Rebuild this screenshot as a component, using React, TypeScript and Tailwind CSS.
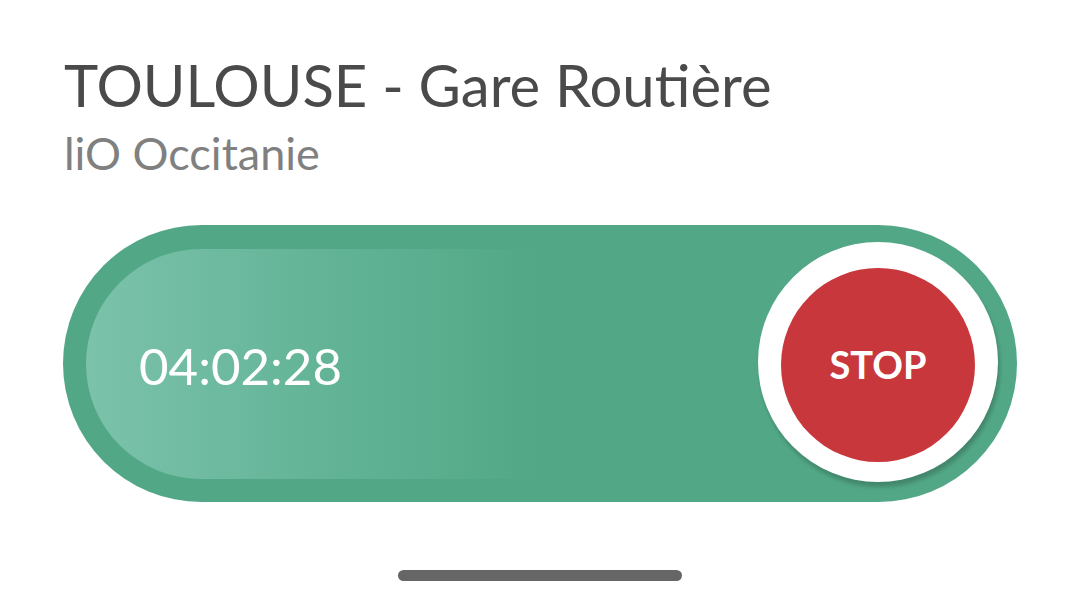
export default function App() {
  return (
    <div
      className="flex h-[607px] w-[1080px] flex-col bg-white"
      style={{ fontFamily: "Lato, 'Open Sans', sans-serif" }}
    >
      <div className="px-[64px] pt-[49px]">
        <h1 className="text-[58px] leading-[72px] font-normal text-[#4a4a4a]">
          TOULOUSE - Gare Routière
        </h1>
        <p className="mt-[6px] text-[45px] leading-[52px] text-[#808080]">liO Occitanie</p>
      </div>

      <div className="mt-[46px] px-[63px]">
        <div className="flex h-[277px] items-center rounded-full bg-[#52a886] pl-[23px] pr-[19px]">
          <div className="flex h-[230px] flex-1 items-center rounded-l-full bg-[linear-gradient(90deg,#7cc2ab_0%,#66b69a_30%,#52a886_67%)] pl-[53px]">
            <span className="mt-[4px] text-[51px] leading-none text-white">04:02:28</span>
          </div>
          <div className="mt-[-4px] flex h-[240px] w-[240px] shrink-0 items-center justify-center rounded-full bg-white shadow-[2px_5px_4px_rgba(0,0,0,0.2)]">
            <button className="mt-[6px] flex h-[194px] w-[194px] items-center justify-center rounded-full bg-[#c8373c] text-[38px] font-bold text-white">
              STOP
            </button>
          </div>
        </div>
      </div>

      <div className="mt-auto mb-[26px] flex justify-center">
        <div className="h-[11px] w-[284px] rounded-full bg-[#666666]" />
      </div>
    </div>
  );
}
